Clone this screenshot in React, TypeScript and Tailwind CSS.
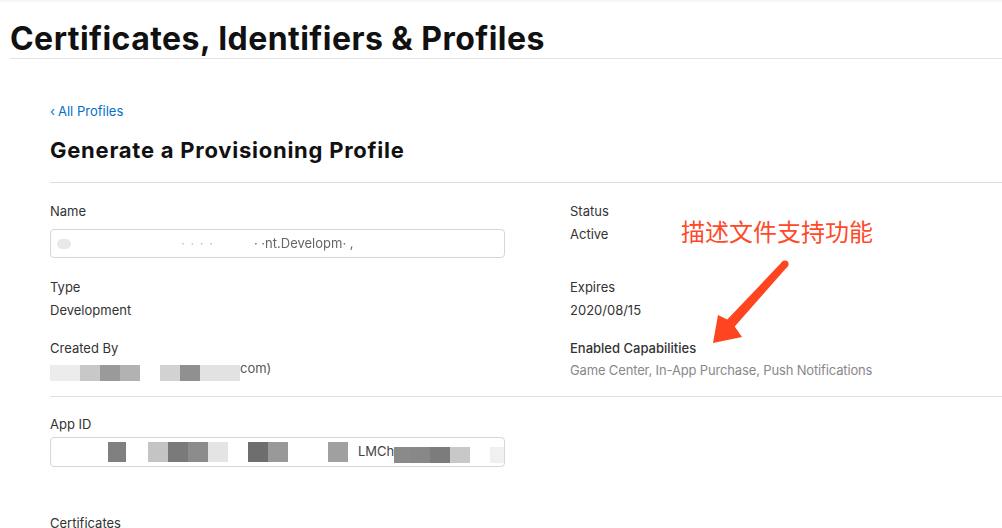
import React from "react";

type Block = { w: number; c: string; ml?: number };

function Blocks({ items }: { items: Block[] }) {
  return (
    <>
      {items.map((b, i) => (
        <span
          key={i}
          className="block h-full shrink-0"
          style={{ width: b.w, background: b.c, marginLeft: b.ml ?? 0 }}
        />
      ))}
    </>
  );
}

function Field({ label, children, labelClass }: { label: string; children?: React.ReactNode; labelClass?: string }) {
  return (
    <div className="flex flex-col">
      <div className={"text-[13px] leading-[18px] text-[#333] " + (labelClass ?? "")}>{label}</div>
      {children}
    </div>
  );
}

export default function App() {
  return (
    <div
      className="relative w-full min-h-[528px] bg-white overflow-hidden"
      style={{ fontFamily: "Inter, 'Noto Sans', 'Liberation Sans', sans-serif" }}
    >
      <div className="h-[2px] bg-[#f6f6f6]" />
      <header className="ml-[10px] border-b border-[#e3e3e3] pt-[17px]">
        <h1 className="text-[32px] leading-[39px] font-bold text-[#111] tracking-[0.45px]">
          Certificates, Identifiers &amp; Profiles
        </h1>
      </header>

      <main className="pl-[50px] pt-[43px]">
        <a className="block text-[13px] leading-[18px] text-[#0070c9]">
          <span className="mr-[3px]">‹</span>All Profiles
        </a>
        <h2 className="mt-[16px] text-[22px] leading-[28px] font-bold text-[#111] tracking-[0.75px]">
          Generate a Provisioning Profile
        </h2>

        <section className="mt-[18px] border-t border-[#dedede] pt-[19px] pb-[16px] border-b">
          <div className="grid grid-cols-[520px_1fr] gap-y-[20px]">
            <Field label="Name">
              <div className="mt-[9px] h-[29px] w-[455px] rounded-[4px] border border-[#d6d6d6] flex items-center pl-[6px] overflow-hidden">
                <span className="h-[10px] w-[14px] rounded-full bg-[#e8e8e8]" />
                <span className="ml-[110px] text-[13px] text-[#bbb] blur-[0.6px] tracking-[1px]">· · ·  ·</span>
                <span className="ml-[40px] text-[13px] text-[#666] blur-[0.5px]">· ·nt.Developm·  ,</span>
              </div>
            </Field>
            <Field label="Status">
              <div className="mt-[5px] text-[13px] leading-[18px] text-[#333]">Active</div>
            </Field>

            <Field label="Type">
              <div className="mt-[5px] text-[13px] leading-[18px] text-[#333]">Development</div>
            </Field>
            <Field label="Expires">
              <div className="mt-[5px] text-[13px] leading-[18px] text-[#333]">2020/08/15</div>
            </Field>

            <Field label="Created By">
              <div className="mt-[5px] h-[18px] flex items-center">
                <div className="flex h-[16px] items-stretch mt-[4px]">
                  <Blocks
                    items={[
                      { w: 30, c: "#ececec" },
                      { w: 20, c: "#c8c8c8" },
                      { w: 20, c: "#9a9a9a" },
                      { w: 20, c: "#b2b2b2" },
                      { w: 20, c: "#d2d2d2", ml: 20 },
                      { w: 20, c: "#909090" },
                      { w: 40, c: "#e2e2e2" },
                    ]}
                  />
                </div>
                <span className="text-[13px] text-[#555] -mt-[4px]">com)</span>
              </div>
            </Field>
            <Field label="Enabled Capabilities" labelClass="font-medium">
              <div className="mt-[4px] text-[13px] leading-[18px] text-[#888] tracking-[-0.15px]">
                Game Center, In-App Purchase, Push Notifications
              </div>
            </Field>
          </div>
        </section>

        <section className="pt-[18px]">
          <Field label="App ID">
            <div className="mt-[4px] h-[30px] w-[455px] rounded-[4px] border border-[#d6d6d6] flex items-center pl-[6px] overflow-hidden">
              <span className="h-[10px] w-[14px] rounded-full bg-[#e8e8e8]" />
              <div className="flex h-[20px] items-stretch ml-[51px]">
                <Blocks
                  items={[
                    { w: 18, c: "#808080" },
                    { w: 20, c: "#c4c4c4", ml: 22 },
                    { w: 20, c: "#7a7a7a" },
                    { w: 20, c: "#8c8c8c" },
                    { w: 20, c: "#e4e4e4" },
                    { w: 20, c: "#6e6e6e", ml: 20 },
                    { w: 20, c: "#999999" },
                    { w: 20, c: "#a0a0a0", ml: 40 },
                  ]}
                />
              </div>
              <span className="ml-[10px] text-[13px] text-[#444] whitespace-nowrap">LMCh</span>
              <div className="flex h-[16px] items-stretch mt-[6px]">
                <Blocks
                  items={[
                    { w: 16, c: "#8a8a8a" },
                    { w: 20, c: "#888888" },
                    { w: 20, c: "#7c7c7c" },
                    { w: 20, c: "#c8c8c8" },
                    { w: 18, c: "#f0f0f0", ml: 20 },
                  ]}
                />
              </div>
            </div>
          </Field>
          <div className="mt-[47px] text-[13px] leading-[18px] text-[#333]">Certificates</div>
        </section>
      </main>

      <div
        className="absolute left-[681px] top-[217px] text-[24px] leading-[28px] text-[#ff4a2a] whitespace-nowrap"
        style={{ fontFamily: "'Noto Sans CJK SC', sans-serif" }}
      >
        描述文件支持功能
      </div>
      <svg className="absolute left-0 top-0" width="1002" height="528" viewBox="0 0 1002 528">
        <polygon
          points="782.4,261.6 727.3,319.6 718,315 713,343 742,337 734.7,326.4 787.6,266.4"
          fill="#ff4420"
        />
        <circle cx="785" cy="264" r="3.6" fill="#ff4420" />
      </svg>
    </div>
  );
}
